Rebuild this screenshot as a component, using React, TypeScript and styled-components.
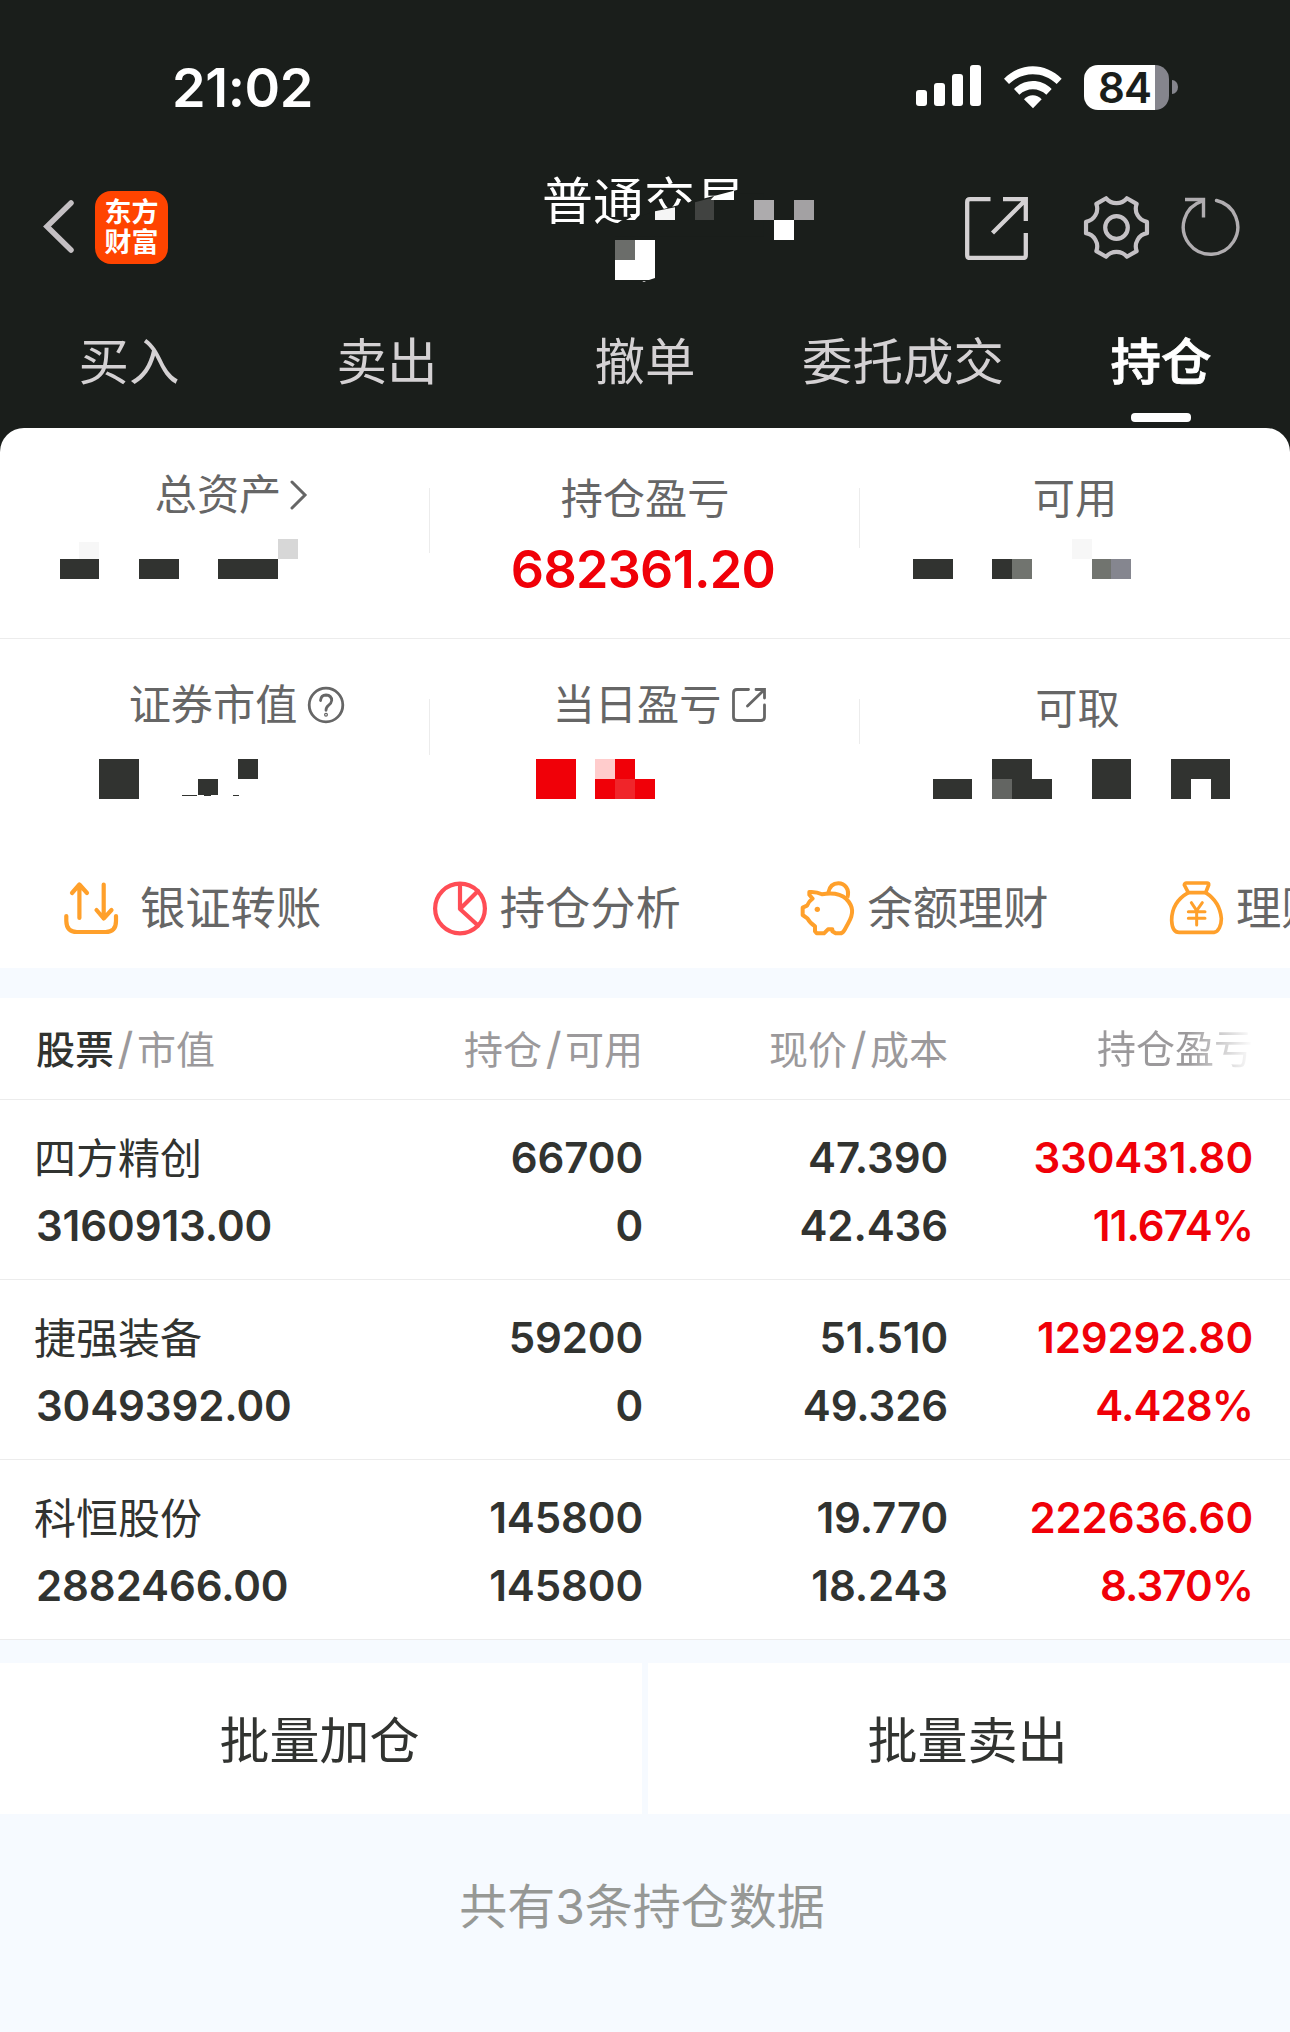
import React from 'react';
import styled, { createGlobalStyle } from 'styled-components';

const GlobalStyle = createGlobalStyle`
  * { box-sizing: border-box; }
  body {
    margin: 0;
    background: #f6faff;
    font-family: Inter, "Noto Sans CJK SC", sans-serif;
  }
  svg { display: block; flex: none; }
`;

const ink = '#313330';
const red = '#f00008';
const night = '#1a1e1b';

const Page = styled.div`
  width: 1290px;
  height: 2032px;
  overflow: hidden;
  background: #f6faff;
`;

const Header = styled.header`
  background: ${night};
  color: #fff;
`;

const StatusBar = styled.div`
  height: 174px;
  display: flex;
  align-items: center;
  justify-content: space-between;
  padding: 0 112px 0 172px;
`;

const Clock = styled.div`
  padding-top: 1px;
  font-size: 54px;
  line-height: 60px;
  font-weight: 600;
  letter-spacing: -0.4px;
`;

const StatusIcons = styled.div`
  display: flex;
  align-items: center;
  gap: 22px;
`;

const Battery = styled.div`
  display: flex;
  align-items: center;
  gap: 3px;
`;

const BatteryBody = styled.div`
  width: 85px;
  height: 45px;
  border-radius: 14px;
  background: linear-gradient(90deg, #fff 71px, #85858d 71px);
  color: ${night};
  font-size: 42px;
  line-height: 45px;
  font-weight: 600;
  letter-spacing: -1px;
  padding-left: 14px;
`;

const BatteryTip = styled.div`
  width: 6px;
  height: 14px;
  border-radius: 0 6px 6px 0 / 0 7px 7px 0;
  background: #85858d;
`;

const NavBar = styled.nav`
  height: 106px;
  display: flex;
  align-items: center;
  padding-left: 42px;
`;

const Logo = styled.div`
  width: 73px;
  height: 73px;
  margin-left: 17px;
  padding-top: 7px;
  border-radius: 16px;
  background: #ff4400;
  color: #fff;
  font-size: 27px;
  line-height: 30px;
  font-weight: 700;
  text-align: center;
`;

const Title = styled.div`
  position: relative;
  align-self: flex-start;
  width: 300px;
  height: 106px;
  margin-left: 374px;
  font-size: 51px;
  line-height: 56px;
  white-space: nowrap;
`;

const TitleCover = styled.svg`
  position: absolute;
  left: 0;
  top: 0;
`;

const NavIcons = styled.div`
  display: flex;
  align-items: center;
  margin-left: 123px;
`;

const Tabs = styled.div`
  height: 148px;
  display: grid;
  grid-template-columns: repeat(5, 1fr);
`;

const Tab = styled.div<{ $active?: boolean }>`
  display: flex;
  flex-direction: column;
  align-items: center;
  padding-top: 52px;
  font-size: 50.500px;
  line-height: 60px;
  color: ${p => (p.$active ? '#fff' : '#d4d1d3')};
  font-weight: ${p => (p.$active ? 500 : 400)};
  -webkit-text-stroke: ${p => (p.$active ? '0.8px #fff' : '0')};
  &::after {
    content: "";
    display: ${p => (p.$active ? 'block' : 'none')};
    width: 60px;
    height: 9px;
    margin-top: 21px;
    border-radius: 4px;
    background: #fff;
  }
`;

const PanelWrap = styled.div`
  background: ${night};
`;

const Panel = styled.section`
  height: 540px;
  border-radius: 24px 24px 0 0;
  background: #fff;
  overflow: hidden;
`;

const SummaryRow = styled.div<{ $first?: boolean }>`
  height: 211px;
  display: grid;
  grid-template-columns: repeat(3, 430px);
  border-bottom: ${p => (p.$first ? '1px solid #ececec' : 'none')};
`;

const SummaryCell = styled.div<{ $rule?: number }>`
  height: 210px;
  background: ${p => (p.$rule ? 'linear-gradient(#ececec, #ececec) no-repeat' : 'none')};
  background-size: 1px ${p => p.$rule || 0}px;
  background-position: right 60px;
`;

const SummaryLabel = styled.div<{ $top: number; $shift?: number }>`
  height: 60px;
  margin-top: ${p => p.$top}px;
  padding-left: ${p => p.$shift || 0}px;
  display: flex;
  align-items: center;
  justify-content: center;
  color: #666;
  font-size: 42.200px;
  line-height: 60px;
  white-space: nowrap;
`;

const LabelIcon = styled.svg<{ $gap: number }>`
  margin-left: ${p => p.$gap}px;
`;

const SummaryValue = styled.div`
  margin-top: 11px;
  padding-right: 4px;
  font-size: 52px;
  line-height: 60px;
  font-weight: 600;
  letter-spacing: -0.7px;
  color: ${red};
  text-align: center;
`;

const Actions = styled.div`
  height: 118px;
  display: grid;
  grid-template-columns: repeat(4, 368.7px);
  padding-left: 60px;
  overflow: hidden;
`;

const Action = styled.div<{ $gap: number }>`
  display: flex;
  align-items: center;
  gap: ${p => p.$gap}px;
  height: 118px;
  color: #666;
  font-size: 45.300px;
  line-height: 60px;
  white-space: nowrap;
`;

const Band = styled.div<{ $h: number }>`
  height: ${p => p.$h}px;
  background: #f6faff;
`;

const columns = '1fr 270px 305px 305px';

const TableHead = styled.div`
  height: 102px;
  display: grid;
  grid-template-columns: ${columns};
  padding: 0 37px 0 36px;
  align-items: center;
  background: #fff;
  border-bottom: 1px solid #ececec;
  color: #9b999b;
  font-size: 39px;
  line-height: 60px;
`;

const HeadCell = styled.div<{ $right?: boolean }>`
  text-align: ${p => (p.$right ? 'right' : 'left')};
  white-space: nowrap;
`;

const Strong = styled.span`
  color: ${ink};
  font-weight: 500;
`;

const Slash = styled.span`
  margin: 0 3.500px;
  font-size: 44px;
`;

const Faded = styled.span`
  background: linear-gradient(90deg, #9b999b 58%, #ffffff 100%);
  background-clip: text;
  color: transparent;
`;

const Holding = styled.div`
  height: 180px;
  display: grid;
  grid-template-columns: ${columns};
  padding: 24px 37px 0 36px;
  background: #fff;
  border-bottom: 1px solid #ececec;
`;

const HoldingCell = styled.div<{ $right?: boolean; $gain?: boolean }>`
  display: flex;
  flex-direction: column;
  align-items: ${p => (p.$right ? 'flex-end' : 'flex-start')};
  color: ${p => (p.$gain ? red : ink)};
  font-size: 42px;
  line-height: 68px;
  font-weight: 600;
  letter-spacing: -0.1px;
  white-space: nowrap;
`;

const StockName = styled.span`
  height: 68px;
  margin-left: -2px;
  padding-top: 1px;
  font-weight: 400;
  letter-spacing: 0;
`;

const Percent = styled.span`
  letter-spacing: -0.9px;
`;

const BatchBar = styled.div`
  display: grid;
  grid-template-columns: 642px 642px;
  gap: 6px;
`;

const BatchButton = styled.button`
  height: 151px;
  border: 0;
  padding: 4px 3px 0 0;
  background: #fff;
  color: ${ink};
  font-family: inherit;
  font-size: 50px;
  line-height: 60px;
`;

const Footer = styled.div`
  padding-top: 63px;
  text-align: center;
  color: #969895;
  font-size: 48px;
  line-height: 60px;
  padding-right: 6px;
`;

type Tile = [number, number, number, number, string?];

/* Redacted amounts: blocks on a 20px lattice, measured from the cell's left edge. */
const Blocks = styled.svg<{ $top: number }>`
  margin-top: ${p => p.$top}px;
`;

const Redacted = ({ tiles, top }: { tiles: Tile[]; top: number }) => (
  <Blocks $top={top} width="430" height="44" shapeRendering="crispEdges">
    {tiles.map(([x, y, w, h, fill], i) => (
      <rect key={i} x={x} y={y} width={w} height={h} fill={fill || ink} />
    ))}
  </Blocks>
);

const totalTiles: Tile[] = [
  [79, 3, 20, 17, '#f7f7f7'], [278, 0, 20, 20, '#d7d7d7'],
  [60, 20, 39, 20], [139, 20, 40, 20], [218, 20, 60, 20],
];
const availableTiles: Tile[] = [
  [53, 20, 40, 20], [132, 20, 20, 20], [152, 20, 20, 20, '#71746f'],
  [212, 0, 20, 20, '#f7f7f7'], [232, 20, 19, 20, '#71746f'], [251, 20, 20, 20, '#85868f'],
];
const marketTiles: Tile[] = [
  [99, 0, 40, 40], [198, 20, 20, 16], [238, 0, 20, 20],
  [182, 36, 15, 1], [204, 36, 7, 1], [233, 36, 6, 1],
];
const todayTiles: Tile[] = [
  [106, 0, 40, 40, red], [165, 0, 20, 20, '#ffcccc'], [185, 0, 20, 20, red],
  [165, 20, 20, 20, red], [185, 20, 20, 20, '#f0252a'], [205, 20, 20, 20, red],
];
const withdrawTiles: Tile[] = [
  [73, 20, 39, 20], [132, 0, 40, 20], [132, 20, 20, 20, '#636562'], [152, 20, 40, 20],
  [232, 0, 39, 40], [311, 0, 59, 20], [311, 20, 20, 20], [351, 20, 19, 20],
];

const gearPath = (() => {
  const at = (deg: number) => {
    const a = (deg * Math.PI) / 180;
    return `${(33.5 + 31 * Math.cos(a)).toFixed(2)} ${(32.5 + 31 * Math.sin(a)).toFixed(2)}`;
  };
  let d = `M${at(-10.5)}`;
  for (let k = 0; k < 6; k++) {
    d += ` L${at(k * 60 + 10.5)} A13.5 13.5 0 0 0 ${at(k * 60 + 49.5)}`;
  }
  return d + 'Z';
})();

const NavIcon = styled.svg<{ $gap?: number }>`
  margin-left: ${p => p.$gap || 0}px;
`;

const SignalSvg = styled.svg`
  margin-right: 1.500px;
`;

const Signal = () => (
  <SignalSvg width="65" height="46" fill="#fff">
    <rect x="0" y="26" width="11" height="16" rx="3" />
    <rect x="18" y="19" width="11" height="23" rx="3" />
    <rect x="36" y="10" width="11" height="32" rx="3" />
    <rect x="54" y="1" width="11" height="41" rx="3" />
  </SignalSvg>
);

const Wifi = () => (
  <svg width="58" height="46" viewBox="371 99 174 138" fill="#fff">
    <path d="M371 143 C420 93 495 93 544 143 L529 159 C488 120 427 120 386 159Z" />
    <path d="M401 174 C433 142 482 142 514 174 L498 191 C475 169 440 169 417 191Z" />
    <path d="M431 205 C446 189 469 189 484 205 L458 232Z" />
  </svg>
);

const holdings = [
  { name: '四方精创', value: '3160913.00', held: '66700', free: '0', price: '47.390', cost: '42.436', gain: '330431.80', rate: '11.674%' },
  { name: '捷强装备', value: '3049392.00', held: '59200', free: '0', price: '51.510', cost: '49.326', gain: '129292.80', rate: '4.428%' },
  { name: '科恒股份', value: '2882466.00', held: '145800', free: '145800', price: '19.770', cost: '18.243', gain: '222636.60', rate: '8.370%' },
];

export default function App() {
  return (
    <Page>
      <GlobalStyle />
      <Header>
        <StatusBar>
          <Clock>21:02</Clock>
          <StatusIcons>
            <Signal />
            <Wifi />
            <Battery>
              <BatteryBody>84</BatteryBody>
              <BatteryTip />
            </Battery>
          </StatusIcons>
        </StatusBar>
        <NavBar>
          <svg width="36" height="60" fill="none" stroke="#c4c0c3" strokeWidth="5.500" strokeLinecap="round">
            <path d="M29 6 L5 29.500 L29 53" />
          </svg>
          <Logo>
            <div>东方</div>
            <div>财富</div>
          </Logo>
          <Title>
            普通交易
            <TitleCover width="300" height="110" viewBox="126 72 900 330">
              <path d="M345 225 L365 211 L416 200 L465 184 L716 118.500 V130 H790 V260 H345Z" fill={night} />
              <path d="M388 204 L400 200 L416 194 L412 202 L405 210 H378Z" fill="#fff" />
              <path d="M465 184 L525 172 V210 H465Z" fill="#f5f5f5" />
              <path d="M585 157 L642 142 V210 H585Z" fill="#414341" />
              <path d="M642 138 L702 122 V150 H632Z" fill="#fff" />
              <rect x="762" y="150" width="60" height="60" fill="#adabad" />
              <rect x="882" y="150" width="60" height="60" fill="#a3a1a3" />
              <rect x="822" y="210" width="60" height="60" fill="#fff" />
              <path d="M345 270 H465 V384 L447 390 H345Z" fill="#fff" />
              <path d="M427 393 H438 L434 396 H430Z" fill="#b5b5b5" />
              <rect x="345" y="270" width="60" height="60" fill="#6b6d6a" />
            </TitleCover>
          </Title>
          <NavIcons>
            <NavIcon width="64" height="66" fill="none" stroke="#d4d1d3" strokeWidth="4.300">
              <path d="M25.500 5.200 H5 Q2.200 5.200 2.200 8 V61 Q2.200 64 5 64 H58 Q60.800 64 60.800 61 V39" />
              <path d="M38 5.200 H60.800 V27 M27.500 39 L60 6.500" />
            </NavIcon>
            <NavIcon $gap={54} width="67" height="65" fill="none" stroke="#c4c1c5" strokeWidth="4.200" strokeLinejoin="round">
              <path d={gearPath} />
              <circle cx="33.500" cy="32.500" r="11.300" />
            </NavIcon>
            <NavIcon $gap={31} width="60" height="62" fill="none" stroke="#b0adb0" strokeWidth="3.400">
              <path d="M35.500 4.500 A27.200 27.200 0 1 1 21 5.200" strokeLinecap="round" />
              <path d="M4 3.500 H22.500 V21.500" />
            </NavIcon>
          </NavIcons>
        </NavBar>
        <Tabs>
          <Tab>买入</Tab>
          <Tab>卖出</Tab>
          <Tab>撤单</Tab>
          <Tab>委托成交</Tab>
          <Tab $active>持仓</Tab>
        </Tabs>
      </Header>

      <PanelWrap>
        <Panel>
          <SummaryRow $first>
            <SummaryCell $rule={65}>
              <SummaryLabel $top={37} $shift={34}>
                总资产
                <LabelIcon $gap={6} width="22" height="36" fill="none" stroke="#666" strokeWidth="3" strokeLinecap="round">
                  <path d="M5 5 L18 18 L5 31" />
                </LabelIcon>
              </SummaryLabel>
              <Redacted tiles={totalTiles} top={14} />
            </SummaryCell>
            <SummaryCell $rule={60}>
              <SummaryLabel $top={41}>持仓盈亏</SummaryLabel>
              <SummaryValue>682361.20</SummaryValue>
            </SummaryCell>
            <SummaryCell>
              <SummaryLabel $top={41}>可用</SummaryLabel>
              <Redacted tiles={availableTiles} top={10} />
            </SummaryCell>
          </SummaryRow>
          <SummaryRow>
            <SummaryCell $rule={56}>
              <SummaryLabel $top={36} $shift={44}>
                证券市值
                <LabelIcon $gap={10} width="38" height="38" fill="none" stroke="#666" strokeWidth="2.800" strokeLinecap="round">
                  <circle cx="19" cy="19" r="16.800" />
                  <path d="M13.500 14.500 Q14 9 19 9 Q24.700 9.300 24.700 14.500 Q24.500 17 21.500 19.300 Q19 21.200 19 24.300" />
                  <circle cx="19" cy="28.700" r=".6" />
                </LabelIcon>
              </SummaryLabel>
              <Redacted tiles={marketTiles} top={24} />
            </SummaryCell>
            <SummaryCell $rule={45}>
              <SummaryLabel $top={36} $shift={30}>
                当日盈亏
                <LabelIcon $gap={8} width="38" height="38" fill="none" stroke="#666" strokeWidth="2.800" strokeLinecap="round">
                  <path d="M19.500 3.500 H8 Q4.500 3.500 4.500 7 V31 Q4.500 34.500 8 34.500 H32 Q35.500 34.500 35.500 31 V19" />
                  <path d="M27 3.500 H35.500 V12 M18.500 20 L35 4" />
                </LabelIcon>
              </SummaryLabel>
              <Redacted tiles={todayTiles} top={24} />
            </SummaryCell>
            <SummaryCell>
              <SummaryLabel $top={40} $shift={5}>可取</SummaryLabel>
              <Redacted tiles={withdrawTiles} top={20} />
            </SummaryCell>
          </SummaryRow>
          <Actions>
            <Action $gap={18}>
              <svg width="62" height="58" fill="none" stroke="#ffa02b" strokeWidth="4.200" strokeLinecap="round" strokeLinejoin="round">
                <path d="M6.300 36 V41 Q6.500 52 17 52 H45.500 Q56 52 56 41 V36" />
                <path d="M19.400 38 V4.500 M12 13 L19.400 4.500 L27 13 M43.700 4.500 V38.500 M36.500 30 L43.700 38.500 L51.500 30" />
              </svg>
              银证转账
            </Action>
            <Action $gap={11}>
              <svg width="60" height="58" fill="none" stroke="#ff4d55" strokeWidth="4.200" strokeLinecap="round" strokeLinejoin="round">
                <circle cx="31" cy="28.500" r="24.900" />
                <path d="M31 4.500 V29 L49 11 M31 29 L49 45.500" />
              </svg>
              持仓分析
            </Action>
            <Action $gap={10}>
              <svg width="60" height="58" viewBox="54 59 180 174" fill="none" stroke="#ffa02b" strokeWidth="12" strokeLinejoin="round">
                <path d="M91 95 Q111 93 129 102 C158 97 182 98 202 116 C224 139 224 160 208 188 L197 208 Q191 219 183 219 H170 L160 213 V207 H147 L135 219 H113 L108 213 V198 Q94 190 85 174 L71 164 V142 L84 136 Q90 122 101 115 L91 103Z" />
                <path d="M148 97 C152 76 163 69 178 69 C197 69 213 86 205 112" />
                <circle cx="115" cy="147" r="8" fill="#ffa02b" stroke="none" />
              </svg>
              余额理财
            </Action>
            <Action $gap={10}>
              <svg width="60" height="58" viewBox="1158 59 180 174" fill="none" stroke="#ffa02b" strokeWidth="11" strokeLinejoin="round" strokeLinecap="round">
                <path d="M1225 97 L1213 74 Q1214 68 1219 68 H1281 Q1287 68 1286 74 L1277 97Z" />
                <path d="M1225 97 C1188 118 1175 145 1175 180 C1176 202 1184 216 1197 216 H1302 C1316 214 1324 195 1324 175 C1321 138 1305 115 1277 97" />
                <path d="M1234 127 L1250 151 L1267 127 M1250 152 V194 M1225 154 H1275 M1225 174 H1275" strokeWidth="9" />
              </svg>
              理财
            </Action>
          </Actions>
        </Panel>
      </PanelWrap>

      <Band $h={30} />
      <TableHead>
        <HeadCell><Strong>股票</Strong><Slash>/</Slash>市值</HeadCell>
        <HeadCell $right>持仓<Slash>/</Slash>可用</HeadCell>
        <HeadCell $right>现价<Slash>/</Slash>成本</HeadCell>
        <HeadCell $right><Faded>持仓盈亏</Faded></HeadCell>
      </TableHead>
      {holdings.map(h => (
        <Holding key={h.name}>
          <HoldingCell>
            <StockName>{h.name}</StockName>
            <span>{h.value}</span>
          </HoldingCell>
          <HoldingCell $right>
            <span>{h.held}</span>
            <span>{h.free}</span>
          </HoldingCell>
          <HoldingCell $right>
            <span>{h.price}</span>
            <span>{h.cost}</span>
          </HoldingCell>
          <HoldingCell $right $gain>
            <span>{h.gain}</span>
            <Percent>{h.rate}</Percent>
          </HoldingCell>
        </Holding>
      ))}
      <Band $h={23} />
      <BatchBar>
        <BatchButton>批量加仓</BatchButton>
        <BatchButton>批量卖出</BatchButton>
      </BatchBar>
      <Footer>共有3条持仓数据</Footer>
    </Page>
  );
}
